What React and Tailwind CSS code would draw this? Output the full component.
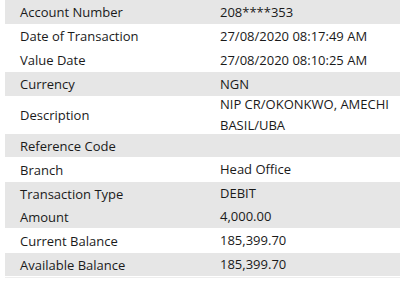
import React from 'react';

const rows = [
  { label: 'Account Number', value: '208****353', shade: true, h: 'h-[24px]' },
  { label: 'Date of Transaction', value: '27/08/2020 08:17:49 AM', h: 'h-[24px]' },
  { label: 'Value Date', value: '27/08/2020 08:10:25 AM', h: 'h-[24px]' },
  { label: 'Currency', value: 'NGN', shade: true, h: 'h-[24px]' },
  { label: 'Description', value: ['NIP CR/OKONKWO, AMECHI', 'BASIL/UBA'], h: 'h-[38px]' },
  { label: 'Reference Code', value: '', shade: true, h: 'h-[23px]' },
  { label: 'Branch', value: 'Head Office', h: 'h-[25px]' },
  { label: 'Transaction Type', value: 'DEBIT', shade: true, h: 'h-[23px]' },
  { label: 'Amount', value: '4,000.00', shade: true, h: 'h-[23px]' },
  { label: 'Current Balance', value: '185,399.70', h: 'h-[25px]' },
  { label: 'Available Balance', value: '185,399.70', shade: true, h: 'h-[23px]' },
];

export default function App() {
  return (
    <div className="w-[400px] h-[287px] bg-white pl-[5px] font-['Open_Sans',sans-serif] text-[13px] text-[#1a1a1a]">
      {rows.map((r) => (
        <div
          key={r.label}
          className={`flex items-center ${r.h} ${r.shade ? 'bg-[#e6e6e6]' : 'bg-white'}`}
        >
          <div className="w-[215px] pl-[15px] leading-[18px]">{r.label}</div>
          <div className="flex-1 leading-[21px]">
            {Array.isArray(r.value)
              ? r.value.map((line) => <div key={line}>{line}</div>)
              : r.value}
          </div>
        </div>
      ))}
      <div className="h-px mt-px bg-[#eeeeee]" />
    </div>
  );
}
